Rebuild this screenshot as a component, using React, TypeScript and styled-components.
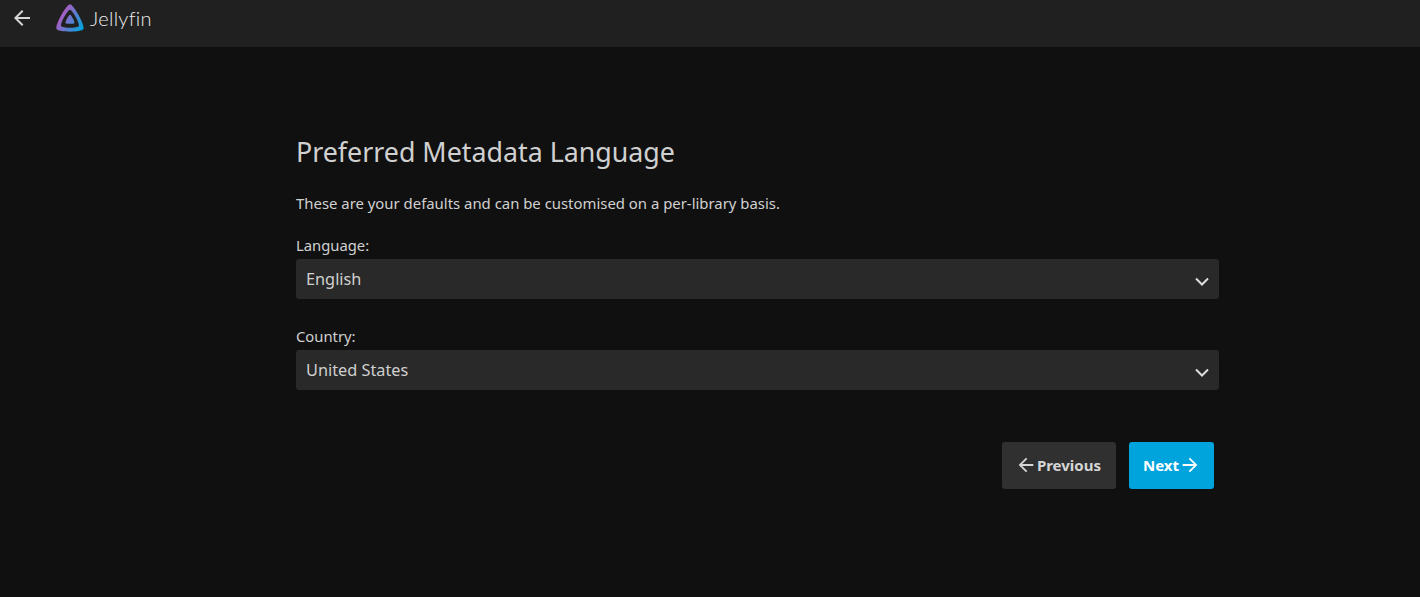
import styled, { createGlobalStyle } from "styled-components";

const GlobalStyle = createGlobalStyle`
  html, body {
    margin: 0;
    height: 100%;
    background: #101010;
    color: #d0d0d0;
    font-family: "Noto Sans", sans-serif;
    overflow: hidden;
  }
`;

const Header = styled.header`
  height: 47px;
  background: #202020;
  display: flex;
  align-items: flex-start;
`;

const BackButton = styled.button`
  width: 44px;
  height: 36px;
  padding: 0;
  border: 0;
  background: none;
  color: #d6d6d6;
  display: flex;
  align-items: center;
  justify-content: center;
`;

const Logo = styled.div`
  margin-left: 11px;
  margin-top: 3px;
  display: flex;
  align-items: center;
  gap: 5px;
`;

const LogoText = styled.span`
  font-family: "Lato", sans-serif;
  font-weight: 300;
  font-size: 20px;
  letter-spacing: 0.3px;
  color: #ececec;
`;

const Main = styled.main`
  width: 923px;
  margin-left: 296px;
  padding-top: 85px;
`;

const Title = styled.h1`
  margin: 0;
  font-size: 26.8px;
  font-weight: 400;
  line-height: 40px;
`;

const Description = styled.p`
  margin: 21px 0 0;
  font-size: 14.9px;
  line-height: 20px;
`;

const Field = styled.div<{ $gap: number }>`
  margin-top: ${(props) => props.$gap}px;
`;

const Label = styled.label`
  display: block;
  font-size: 14.8px;
  line-height: 20px;
  margin-bottom: 4px;
`;

const SelectWrap = styled.div`
  position: relative;
  height: 40px;
`;

const Select = styled.select`
  width: 100%;
  height: 40px;
  appearance: none;
  border: 0;
  outline: 0;
  border-radius: 3px;
  background: #292929;
  color: #d0d0d0;
  padding: 0 10px;
  font-family: inherit;
  font-size: 16.3px;
`;

const Chevron = styled.svg`
  position: absolute;
  right: 10px;
  top: 18px;
  width: 14px;
  height: 9px;
  pointer-events: none;
`;

const Actions = styled.div`
  display: flex;
  justify-content: flex-end;
  gap: 13px;
  margin-top: 52px;
  padding-right: 5px;
`;

const Button = styled.button<{ $primary?: boolean }>`
  height: 47px;
  padding: ${(props) => (props.$primary ? "0 13px 2px 14px" : "0 15px 2px 13px")};
  border: 0;
  border-radius: 3px;
  background: ${(props) => (props.$primary ? "#00a4dc" : "#303030")};
  color: ${(props) => (props.$primary ? "#ffffff" : "#d6d6d6")};
  font-family: inherit;
  font-size: 15px;
  font-weight: 700;
  display: flex;
  align-items: center;
`;

function ArrowIcon({ size, flip }: { size: number; flip?: boolean }) {
  return (
    <svg
      width={size}
      height={size}
      viewBox="0 0 24 24"
      fill="currentColor"
      style={flip ? { transform: "scaleX(-1)" } : undefined}
    >
      <path d="M20 11H7.83l5.59-5.59L12 4l-8 8 8 8 1.41-1.41L7.83 13H20v-2z" />
    </svg>
  );
}

function JellyfinLogo() {
  return (
    <svg width="30" height="30" viewBox="0 0 512 512">
      <defs>
        <linearGradient id="jf" x1="100" y1="220" x2="470" y2="440" gradientUnits="userSpaceOnUse">
          <stop offset="0" stopColor="#aa5cc3" />
          <stop offset="1" stopColor="#00a4dc" />
        </linearGradient>
      </defs>
      <path
        fill="url(#jf)"
        d="M256 201.6c-20.4 0-86.2 119.3-76.2 139.4s142.5 19.9 152.4 0S276.5 201.6 256 201.6z"
      />
      <path
        fill="url(#jf)"
        fillRule="evenodd"
        d="M256 23.3c-61.6 0-259.8 359.4-229.6 420.1s429.3 60 459.2 0S317.6 23.3 256 23.3zM406.5 390.8c-19.6 39.3-281.1 39.8-300.9 0s110.1-275.3 150.4-275.3S426.1 351.4 406.5 390.8z"
      />
    </svg>
  );
}

function SelectField({ label, value, gap }: { label: string; value: string; gap: number }) {
  return (
    <Field $gap={gap}>
      <Label>{label}</Label>
      <SelectWrap>
        <Select defaultValue={value}>
          <option>{value}</option>
        </Select>
        <Chevron viewBox="0 0 14 9" fill="none" stroke="#dedede" strokeWidth="2">
          <path d="M1 1.5l6 6 6-6" />
        </Chevron>
      </SelectWrap>
    </Field>
  );
}

export default function App() {
  return (
    <>
      <GlobalStyle />
      <Header>
        <BackButton>
          <ArrowIcon size={24} />
        </BackButton>
        <Logo>
          <JellyfinLogo />
          <LogoText>Jellyfin</LogoText>
        </Logo>
      </Header>
      <Main>
        <Title>Preferred Metadata Language</Title>
        <Description>These are your defaults and can be customised on a per-library basis.</Description>
        <SelectField label="Language:" value="English" gap={22} />
        <SelectField label="Country:" value="United States" gap={27} />
        <Actions>
          <Button>
            <ArrowIcon size={22} />
            Previous
          </Button>
          <Button $primary>
            Next
            <ArrowIcon size={22} flip />
          </Button>
        </Actions>
      </Main>
    </>
  );
}
